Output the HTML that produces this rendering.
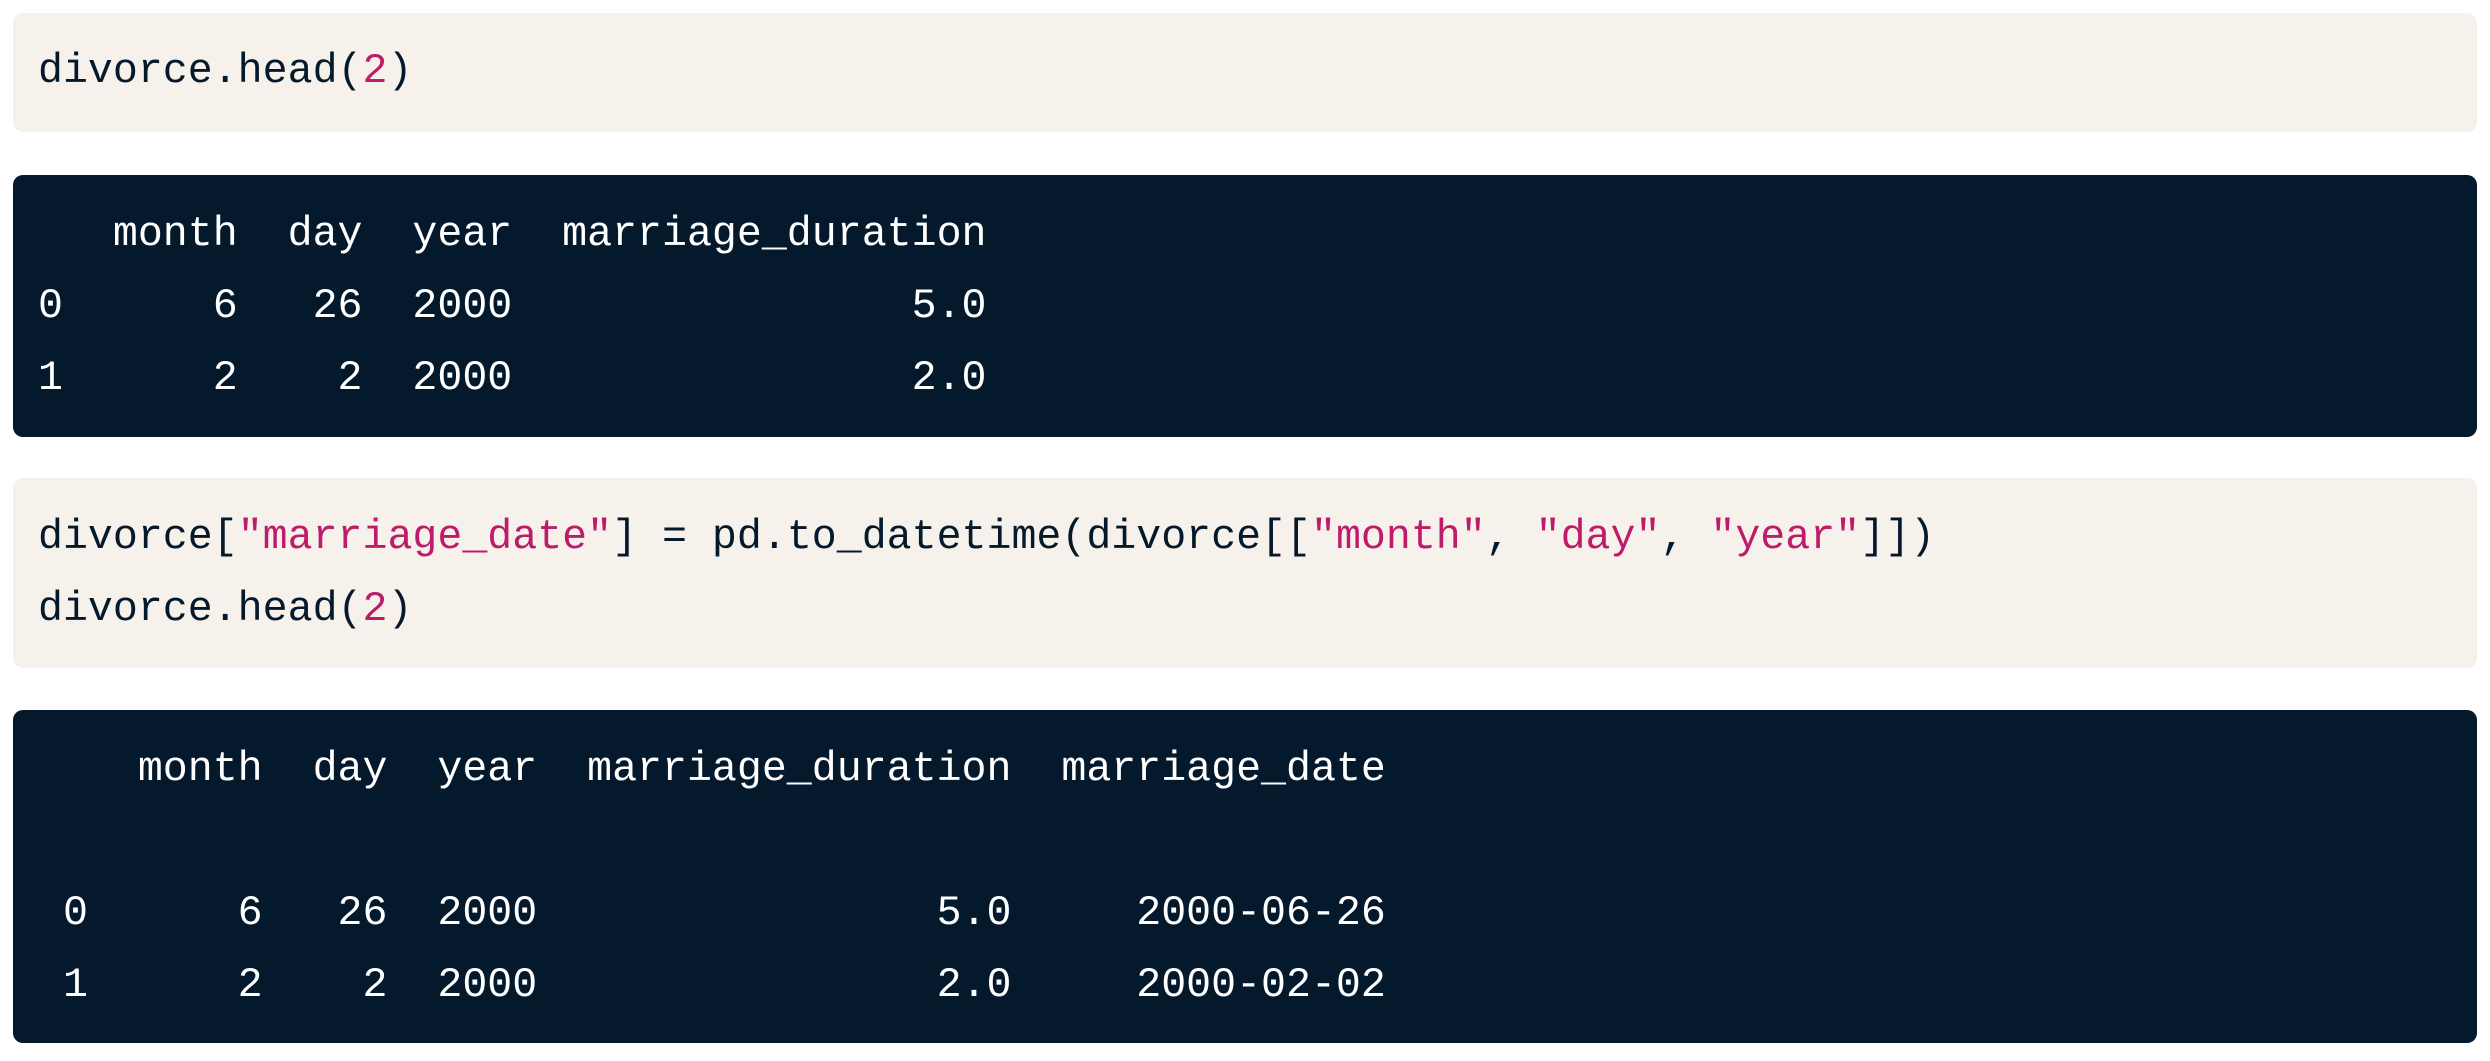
<!DOCTYPE html>
<html><head><meta charset="utf-8"><style>
html,body{margin:0;padding:0;background:#fff;width:2490px;height:1061px;overflow:hidden}
.b{position:absolute;left:13px;width:2464px;box-sizing:border-box;border-radius:10px;padding:23px 25px;margin:0;
font-family:"Liberation Mono",monospace;font-size:41.6px;line-height:72px;white-space:pre}
.l{background:#f6f2eb;color:#05192d}
.d{background:#05192d;color:#fff}
.s{color:#bf1b6b}
</style></head><body>
<pre class="b l" style="top:13px;height:119px">divorce.head(<span class="s">2</span>)</pre>
<pre class="b d" style="top:175px;height:262px;padding-top:24px">   month  day  year  marriage_duration
0      6   26  2000                5.0
1      2    2  2000                2.0</pre>
<pre class="b l" style="top:478px;height:190px;padding-top:24px">divorce[<span class="s">"marriage_date"</span>] = pd.to_datetime(divorce[[<span class="s">"month"</span>, <span class="s">"day"</span>, <span class="s">"year"</span>]])
divorce.head(<span class="s">2</span>)</pre>
<pre class="b d" style="top:710px;height:333px;padding-top:24px">    month  day  year  marriage_duration  marriage_date

 0      6   26  2000                5.0     2000-06-26
 1      2    2  2000                2.0     2000-02-02</pre>
</body></html>
